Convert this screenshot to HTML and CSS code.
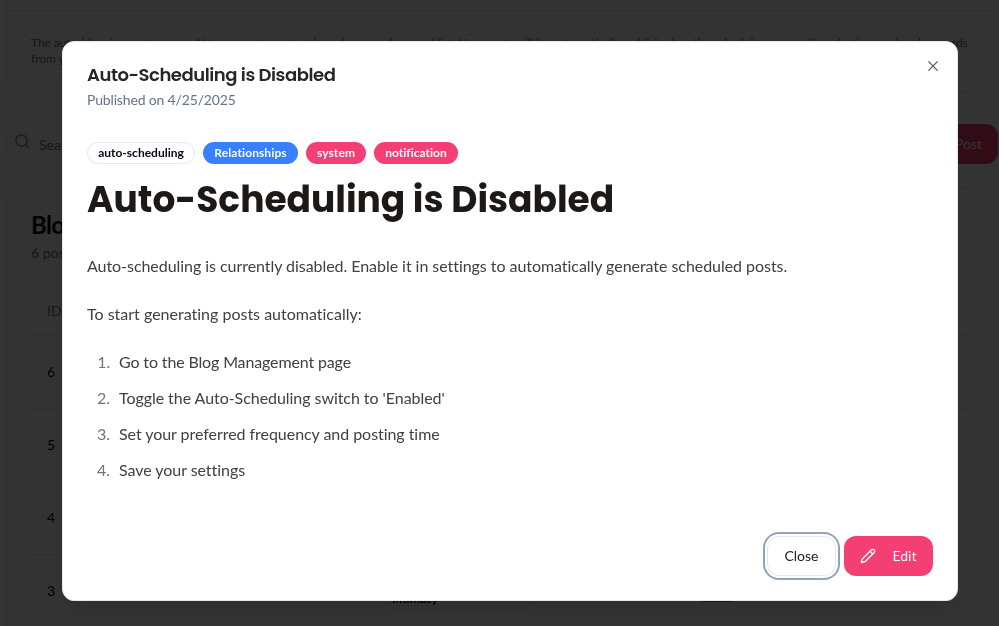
FILE: index.html
```html
<!DOCTYPE html>
<html lang="en">
<head>
<meta charset="utf-8">
<title>Blog Management</title>
<link rel="stylesheet" href="styles.css">
</head>
<body>
<main class="page">
  <section class="settings">
    <div class="settings-head"></div>
    <p>The auto-blogging system uses AI to generate content based on your keyword list. New posts will be automatically published on the schedule you specify, selecting random keywords<br>from your list.</p>
  </section>
  <div class="toolbar">
    <div class="search">
      <svg width="16" height="16" viewBox="0 0 16 16" fill="none" stroke="currentColor" stroke-width="1.3"><circle cx="6.5" cy="6.5" r="5.6"/><path d="M10.5 10.5l3.2 3.2"/></svg>
      <span>Search posts...</span>
    </div>
    <div class="new-post">New Post</div>
  </div>
  <section class="posts">
    <h2>Blog Posts</h2>
    <p class="count">6 posts found</p>
    <div class="row row-head">ID</div>
    <div class="row">6</div>
    <div class="row">5</div>
    <div class="row">4</div>
    <div class="row row-last"><span class="id">3</span><span class="category">Intimacy</span><span class="state"></span></div>
  </section>
</main>
<div class="overlay">
  <div class="dialog" role="dialog">
    <svg class="dismiss" width="16" height="16" viewBox="0 0 16 16" fill="none" stroke="currentColor" stroke-width="1.25"><path d="M3.4 3.4l9.2 9.2M12.6 3.4L3.4 12.6"/></svg>
    <h2 class="title">Auto-Scheduling is Disabled</h2>
    <p class="published">Published on 4/25/2025</p>
    <div class="tags">
      <span class="tag tag-outline">auto-scheduling</span>
      <span class="tag tag-blue">Relationships</span>
      <span class="tag tag-system">system</span>
      <span class="tag tag-notification">notification</span>
    </div>
    <article>
      <h1>Auto-Scheduling is Disabled</h1>
      <p>Auto-scheduling is currently disabled. Enable it in settings to automatically generate scheduled posts.</p>
      <p>To start generating posts automatically:</p>
      <ol>
        <li>Go to the Blog Management page</li>
        <li>Toggle the Auto-Scheduling switch to 'Enabled'</li>
        <li>Set your preferred frequency and posting time</li>
        <li>Save your settings</li>
      </ol>
    </article>
    <div class="actions">
      <button class="btn close">Close</button>
      <button class="btn edit">
        <svg width="16" height="16" viewBox="0 0 24 24" fill="none" stroke="currentColor" stroke-width="2" stroke-linecap="round" stroke-linejoin="round"><path d="M17 3a2.85 2.83 0 1 1 4 4L7.5 20.5 2 22l1.5-5.5Z"/><path d="m15 5 4 4"/></svg>
        <span>Edit</span>
      </button>
    </div>
  </div>
</div>
</body>
</html>
```
FILE: styles.css
```css
* { box-sizing: border-box; }
body {
  margin: 0;
  height: 626px;
  overflow: hidden;
  background: #fff;
  font-family: Lato, sans-serif;
  font-variant-ligatures: none;
  color: #020817;
}
h1, h2, p, ol { margin: 0; }
.page { height: 626px; overflow: hidden; padding: 0 1px 0 6px; }
.settings {
  height: 92px;
  border: 1px solid #e2e8f0;
  border-top: 0;
  border-radius: 0 0 12px 12px;
}
.settings-head { height: 11px; border-bottom: 1px solid #e2e8f0; }
.settings p {
  padding: 24px 24px 0;
  font-size: 12px;
  line-height: 16px;
  letter-spacing: -.077px;
  white-space: nowrap;
  color: #64748b;
}
.toolbar { display: flex; justify-content: space-between; margin-top: 32px; }
.search {
  display: flex;
  gap: 8px;
  width: 384px;
  height: 40px;
  padding: 9px 8px;
  border: 1px solid #e2e8f0;
  border-radius: 12px;
  color: #64748b;
  font-size: 14px;
  line-height: 21px;
}
.new-post {
  width: 110px;
  height: 40px;
  padding-right: 16px;
  border-radius: 12px;
  background: #f43f75;
  color: #f8fafc;
  font-size: 14px;
  line-height: 40px;
  text-align: right;
}
.posts {
  height: 480px;
  margin-top: 24px;
  padding: 24px;
  border: 1px solid #e2e8f0;
  border-radius: 12px;
}
.posts h2 { font-size: 24px; line-height: 24px; font-weight: 700; letter-spacing: -.6px; }
.count { margin-top: 6px; font-size: 14px; line-height: 20px; color: #64748b; }
.row {
  display: flex;
  align-items: center;
  height: 73px;
  padding: 0 0 2px 16px;
  border-bottom: 1px solid #e2e8f0;
  font-size: 14px;
}
.row-head { height: 49px; margin-top: 24px; color: #64748b; }
.row-last { border: 0; align-items: flex-start; padding-top: 27px; }
.row-last .id { width: 335px; }
.category {
  width: 156px;
  height: 38px;
  margin-top: -10px;
  padding: 18px 0 0 9px;
  border: 1px solid #e2e8f0;
  border-radius: 19px;
  font-size: 12px;
  line-height: 16px;
  font-weight: 700;
}
.state { width: 47px; height: 22px; margin: -2px 0 0 155px; border-radius: 11px; background: #f43f75; }
.overlay {
  position: fixed;
  inset: 0;
  display: grid;
  place-items: center;
  padding: 16px 0 0 21px;
  background: rgba(0, 0, 0, .8);
}
.dialog {
  position: relative;
  display: flex;
  flex-direction: column;
  width: 896px;
  height: 560px;
  padding: 24px;
  background: #fff;
  border: 1px solid #e2e8f0;
  border-radius: 12px;
  box-shadow: 0 10px 15px -3px rgba(0, 0, 0, .1);
}
.dismiss { position: absolute; top: 16px; right: 16px; color: #555; }
.title {
  font: 600 18px/18px Poppins, Inter, sans-serif;
  letter-spacing: -.45px;
  color: #262626;
  white-space: nowrap;
}
.published { margin-top: 6px; font-size: 14px; line-height: 20px; letter-spacing: -.16px; color: #64748b; }
.tags { display: flex; gap: 8px; margin-top: 32px; }
.tag {
  height: 22px;
  padding: 2px 0;
  border: 1px solid transparent;
  border-radius: 11px;
  background: #f43f75;
  color: #f8fafc;
  font-size: 12px;
  line-height: 16px;
  font-weight: 700;
  text-align: center;
}
.tag-outline { width: 108px; background: #fff; border-color: #e2e8f0; color: #020817; }
.tag-blue { width: 95px; background: #3880ff; letter-spacing: .1px; }
.tag-system { width: 60px; letter-spacing: .1px; }
.tag-notification { width: 84px; }
article { color: #44403c; font-size: 16px; line-height: 28px; letter-spacing: -.05px; }
article h1 {
  margin: 16px 0 32px;
  font: 700 36px/40px Poppins, Inter, sans-serif;
  letter-spacing: 0;
  color: #1c1917;
  white-space: nowrap;
}
article p { margin-bottom: 20px; }
article p + p { letter-spacing: 0; }
article ol { padding-left: 27px; }
article li { margin: 8px 0; padding-left: 5px; }
article li:first-child { letter-spacing: -.14px; }
article li::marker { color: #78716c; }
.actions { display: flex; justify-content: flex-end; gap: 8px; margin-top: auto; }
.btn {
  display: flex;
  align-items: center;
  justify-content: center;
  height: 40px;
  padding: 0 16px;
  border: 0;
  border-radius: 12px;
  font: 14px/20px Lato, sans-serif;
}
.close {
  width: 69px;
  background: #fff;
  border: 1px solid #e2e8f0;
  color: #222;
  box-shadow: 0 0 0 2px #fff, 0 0 0 4px #94a3b8;
}
.edit { width: 89px; gap: 16px; background: #f43f75; color: #f8fafc; }
```
